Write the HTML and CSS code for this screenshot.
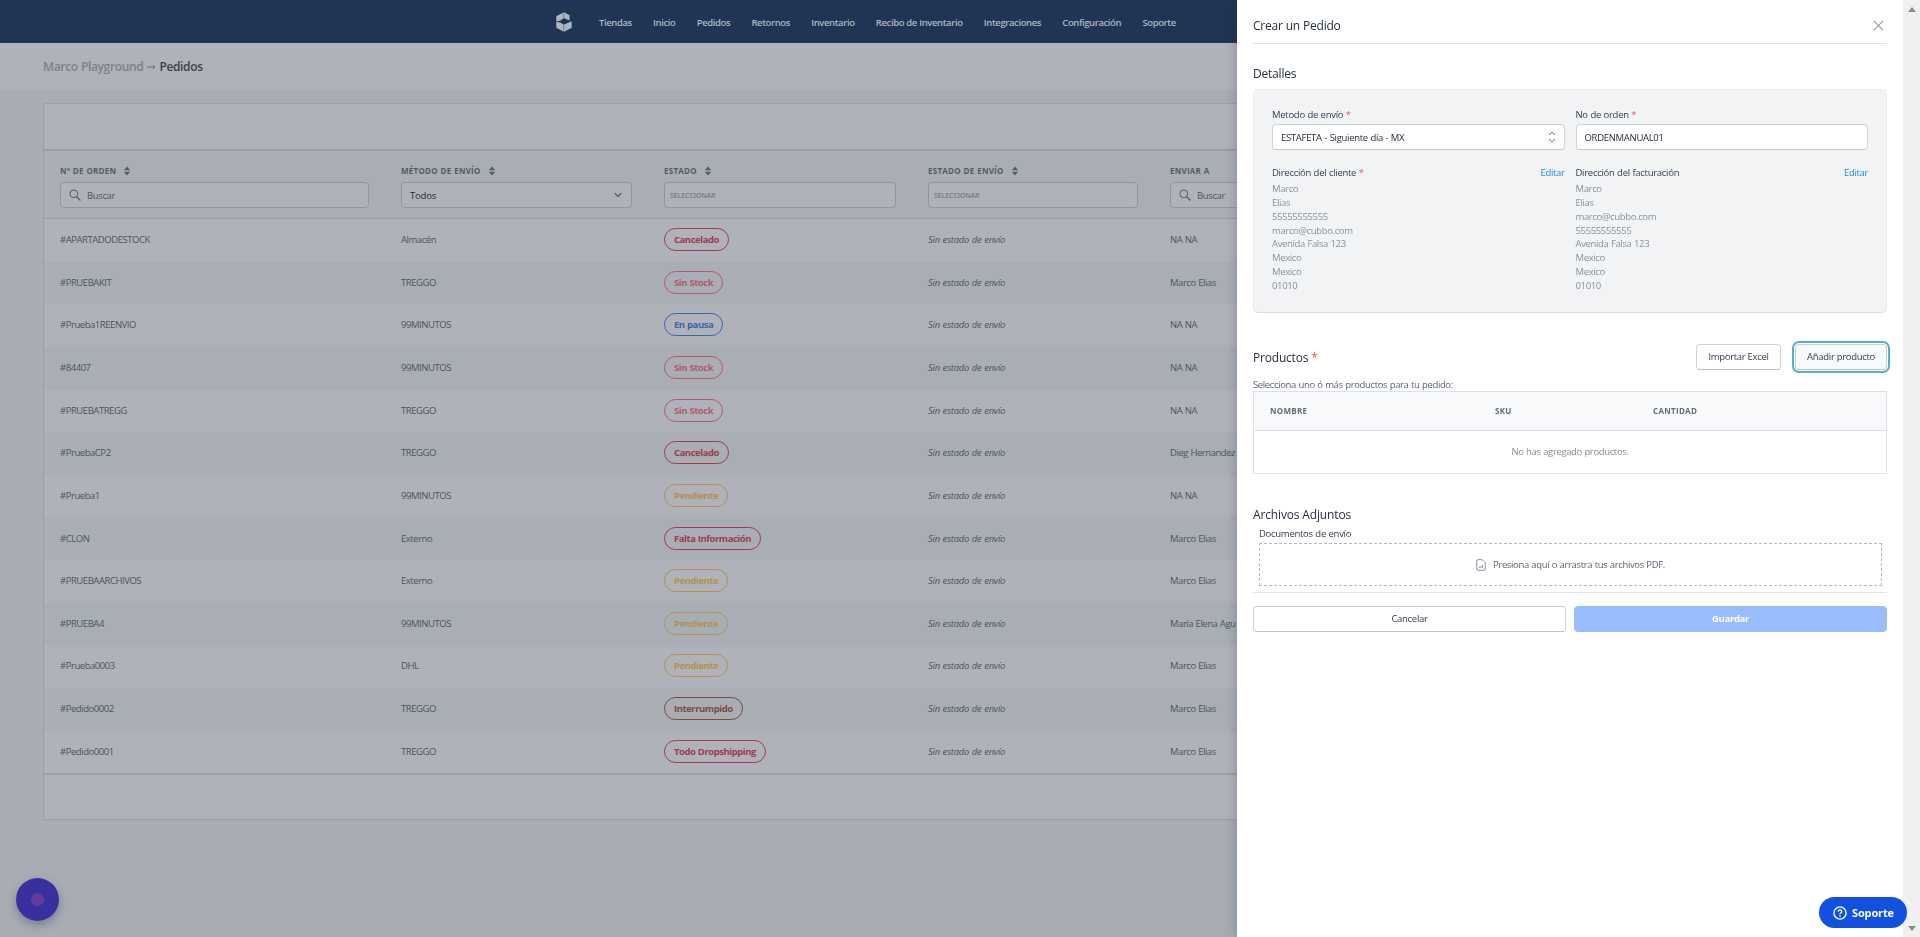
FILE: index.html
```html
<!DOCTYPE html>
<html lang="es">
<head>
<meta charset="utf-8">
<title>Pedidos</title>
<link rel="stylesheet" href="styles.css">
</head>
<body>
<svg class="defs" width="0" height="0">
  <symbol id="sort" viewBox="0 0 8 12"><path d="M4 .6 7.8 5.2H.2zM4 11.4.2 6.8h7.6z" fill="currentColor"/></symbol>
  <symbol id="search" viewBox="0 0 12 12"><circle cx="4.8" cy="4.8" r="3.9" fill="none" stroke="currentColor" stroke-width=".9"/><path d="M7.6 7.6 11.4 11.5" stroke="currentColor" stroke-width="1.1"/></symbol>
</svg>
<div class="page">
  <nav class="nav">
    <svg class="logo" viewBox="0 0 16 20"><path d="M7.7.2V6.2L4.2 8.8.3 9.4V4.2zM8.1.2 13.6 3.2V8.6L8.1 6.2zM.3 9.8 4.2 10.4 7.7 12.6V19.8L.3 15.8zM8.1 12.6 15.7 9.2V15.8L8.1 19.8z" fill="#adb5c1"/></svg>
    <a>Tiendas</a><a>Inicio</a><a>Pedidos</a><a>Retornos</a><a>Inventario</a><a>Recibo de Inventario</a><a>Integraciones</a><a>Configuración</a><a>Soporte</a>
  </nav>
  <header class="crumb"><span class="store">Marco Playground</span><svg class="arrow" viewBox="0 0 9 6"><path d="M0 3H8M6 1.2 8 3 6 4.8" fill="none" stroke="currentColor"/></svg><span>Pedidos</span></header>
  <section class="card">
    <div class="toolbar"></div>
    <div class="row head">
      <div><h6>Nº DE ORDEN <svg><use href="#sort"/></svg></h6><div class="input"><svg class="mag"><use href="#search"/></svg>Buscar</div></div>
      <div><h6>MÉTODO DE ENVÍO <svg><use href="#sort"/></svg></h6><div class="input todos">Todos<svg class="chev" viewBox="0 0 10 8"><path d="M1.8 2.2 5 5.5 8.2 2.2" fill="none" stroke="#454e5b" stroke-width="1.1"/></svg></div></div>
      <div><h6>ESTADO <svg><use href="#sort"/></svg></h6><div class="input sel">SELECCIONAR</div></div>
      <div><h6>ESTADO DE ENVÍO <svg><use href="#sort"/></svg></h6><div class="input sel">SELECCIONAR</div></div>
      <div><h6>ENVIAR A</h6><div class="input"><svg class="mag"><use href="#search"/></svg>Buscar</div></div>
    </div>
    <div class="rows">
      <div class="row"><div>#APARTADODESTOCK</div><div>Almacén</div><div><b class="tag red">Cancelado</b></div><div><i>Sin estado de envío</i></div><div>NA NA</div></div>
      <div class="row"><div>#PRUEBAKIT</div><div>TREGGO</div><div><b class="tag rose">Sin Stock</b></div><div><i>Sin estado de envío</i></div><div>Marco Elias</div></div>
      <div class="row"><div>#Prueba1REENVIO</div><div>99MINUTOS</div><div><b class="tag blue">En pausa</b></div><div><i>Sin estado de envío</i></div><div>NA NA</div></div>
      <div class="row"><div>#84407</div><div>99MINUTOS</div><div><b class="tag rose">Sin Stock</b></div><div><i>Sin estado de envío</i></div><div>NA NA</div></div>
      <div class="row"><div>#PRUEBATREGG</div><div>TREGGO</div><div><b class="tag rose">Sin Stock</b></div><div><i>Sin estado de envío</i></div><div>NA NA</div></div>
      <div class="row"><div>#PruebaCP2</div><div>TREGGO</div><div><b class="tag red">Cancelado</b></div><div><i>Sin estado de envío</i></div><div>Dieg Hernandez</div></div>
      <div class="row"><div>#Prueba1</div><div>99MINUTOS</div><div><b class="tag gold">Pendiente</b></div><div><i>Sin estado de envío</i></div><div>NA NA</div></div>
      <div class="row"><div>#CLON</div><div>Externo</div><div><b class="tag red">Falta Información</b></div><div><i>Sin estado de envío</i></div><div>Marco Elias</div></div>
      <div class="row"><div>#PRUEBAARCHIVOS</div><div>Externo</div><div><b class="tag gold">Pendiente</b></div><div><i>Sin estado de envío</i></div><div>Marco Elias</div></div>
      <div class="row"><div>#PRUEBA4</div><div>99MINUTOS</div><div><b class="tag gold">Pendiente</b></div><div><i>Sin estado de envío</i></div><div>María Elena Agu</div></div>
      <div class="row"><div>#Prueba0003</div><div>DHL</div><div><b class="tag gold">Pendiente</b></div><div><i>Sin estado de envío</i></div><div>Marco Elias</div></div>
      <div class="row"><div>#Pedido0002</div><div>TREGGO</div><div><b class="tag brown">Interrumpido</b></div><div><i>Sin estado de envío</i></div><div>Marco Elias</div></div>
      <div class="row"><div>#Pedido0001</div><div>TREGGO</div><div><b class="tag red">Todo Dropshipping</b></div><div><i>Sin estado de envío</i></div><div>Marco Elias</div></div>
    </div>
    <div class="foot"></div>
  </section>
</div>
<div class="fab"></div>

<aside class="drawer">
  <div class="dhead"><h2>Crear un Pedido</h2><svg viewBox="0 0 12 12"><path d="M1 1 11 11M11 1 1 11" stroke="#8f959d" stroke-width="1.1"/></svg></div>
  <h2 class="t1">Detalles</h2>
  <div class="panel">
    <div>
      <label>Metodo de envío <em>*</em></label>
      <div class="field">ESTAFETA - Siguiente día - MX<svg viewBox="0 0 8 12"><path d="M1.2 4 4 1.2 6.8 4M1.2 8 4 10.8 6.8 8" fill="none" stroke="#8b919b" stroke-width="1.1"/></svg></div>
      <div class="ahead"><label>Dirección del cliente <em>*</em></label><a>Editar</a></div>
      <div class="addr"><p>Marco</p><p>Elias</p><p>55555555555</p><p>marco@cubbo.com</p><p>Avenida Falsa 123</p><p>Mexico</p><p>Mexico</p><p>01010</p></div>
    </div>
    <div>
      <label>No de orden <em>*</em></label>
      <div class="field">ORDENMANUAL01</div>
      <div class="ahead"><label>Dirección del facturación</label><a>Editar</a></div>
      <div class="addr"><p>Marco</p><p>Elias</p><p>marco@cubbo.com</p><p>55555555555</p><p>Avenida Falsa 123</p><p>Mexico</p><p>Mexico</p><p>01010</p></div>
    </div>
  </div>
  <div class="phead"><h2>Productos <em>*</em></h2><button>Importar Excel</button><button class="focus">Añadir producto</button></div>
  <p class="hint">Selecciona uno ó más productos para tu pedido:</p>
  <div class="ptable">
    <div class="phd"><span>NOMBRE</span><span>SKU</span><span>CANTIDAD</span></div>
    <div class="empty">No has agregado productos.</div>
  </div>
  <h2 class="t2">Archivos Adjuntos</h2>
  <label class="docs">Documentos de envío</label>
  <div class="drop"><svg viewBox="0 0 10 12"><path d="M.7 2Q.7.7 2 .7H6.2L9.3 3.8V10Q9.3 11.3 8 11.3H2Q.7 11.3.7 10zM3.4 9.2V7.6M5 9.2V6.8M6.6 9.2V5.8" fill="none" stroke="#7d8694" stroke-width=".9"/></svg>Presiona aquí o arrastra tus archivos PDF.</div>
  <div class="actions"><button>Cancelar</button><button class="save">Guardar</button></div>
</aside>
<div class="scroll"><svg viewBox="0 0 8 5"><path d="M4 0 8 5H0z" fill="#8b8b8d"/></svg><svg viewBox="0 0 8 5"><path d="M0 0H8L4 5z" fill="#8b8b8d"/></svg></div>
<div class="help"><svg viewBox="0 0 14 14"><circle cx="7" cy="7" r="6.1" fill="none" stroke="#fff" stroke-width="1.4"/><path d="M5.2 5.6Q5.3 3.9 7 3.9T8.8 5.5Q8.8 6.4 7.8 6.9T7 8.3" fill="none" stroke="#fff" stroke-width="1.3"/><circle cx="7" cy="10" r=".85" fill="#fff"/></svg>Soporte</div>
</body>
</html>
```
FILE: styles.css
```css
* { box-sizing: border-box; }
body { margin: 0; width: 1920px; height: 937px; overflow: hidden; background: #a7acb5; font-family: "Open Sans", "Noto Sans", sans-serif; font-size: 9.5px; letter-spacing: -.36px; word-spacing: .4px; color: #4b5563; }
h2, h6, p { margin: 0; }
em { font-style: normal; color: #f05252; }
.defs { position: absolute; }
.page { width: 1903px; }
.nav { height: 43px; background: #1f3553; display: flex; align-items: center; padding-left: 556px; }
.logo { width: 16px; height: 20px; margin-right: 27px; }
.nav a { font-size: 9.5px; font-weight: 600; color: #adb6c3; margin-right: 21.3px; padding-top: 1px; white-space: nowrap; letter-spacing: -.4px; word-spacing: .2px; }
.crumb { height: 47px; background: #afb2b9; display: flex; align-items: center; padding-left: 43px; font-size: 12px; font-weight: 600; color: #394250; letter-spacing: -.35px; }
.crumb .store { color: #7b818c; }
.crumb .arrow { color: #6b717c; width: 9px; height: 6px; margin: 1px 3px 0 4px; }
.card { margin: 13px 0 0 43px; border: 1px solid #9ba1a9; background: #afb2b9; }
.toolbar { height: 45px; }
.row { display: grid; grid-template-columns: 341px 263px 264px 242px 1fr; height: 42.65px; align-items: center; }
.row > div { padding: 0 16px; white-space: nowrap; }
.row:nth-child(even) { background: #a9aeb5; }
.rows .row { color: #4a5464; padding-bottom: 1.5px; letter-spacing: -.45px; }
.rows i { letter-spacing: -.25px; }
.head { height: 70px; border-top: 2px solid #9a9fa8; border-bottom: 1px solid #9a9fa8; background: #a9aeb5; align-items: start; padding-top: 13px; }
h6 { font-size: 8px; line-height: 14px; font-weight: 700; letter-spacing: .25px; color: #515b69; display: flex; align-items: center; height: 14px; }
h6 svg { width: 8px; height: 10px; margin-left: 7px; }
.input { margin-top: 4px; height: 26px; border: 1px solid #9096a2; border-radius: 4px; display: flex; align-items: center; padding: 0 8px; color: #4b5563; background: #afb2b9; }
.mag { width: 12px; height: 12px; margin-right: 6px; }
.todos { color: #222a36; letter-spacing: -.2px; }
.chev { width: 10px; height: 8px; margin-left: auto; }
.sel { font-size: 7px; font-weight: 600; letter-spacing: -.1px; color: #727985; padding-left: 5px; }
.tag { display: inline-flex; align-items: center; height: 23px; border: 1px solid; border-radius: 12px; padding: 0 9px; font-size: 9.5px; letter-spacing: -.46px; font-weight: 700; vertical-align: middle; }
.red { color: #a03a4c; }
.rose { color: #b15b69; }
.blue { color: #3c63ad; }
.gold { color: #b1934c; }
.brown { color: #80483f; }
.foot { height: 46px; border-top: 2px solid #9a9fa8; }
.fab { position: fixed; left: 16px; top: 878px; width: 43px; height: 43px; border-radius: 50%; background: radial-gradient(circle, #643a9c 0 6px, #3930a0 6.6px); box-shadow: 0 4px 8px rgba(40, 45, 60, .35); }

.drawer { position: fixed; left: 1237px; top: 0; width: 666px; height: 937px; background: #fff; padding: 0 16px; box-shadow: -2px 0 10px rgba(50, 55, 70, .25); color: #4b5563; }
h2 { font-size: 12px; font-weight: 500; color: #252f3f; line-height: 18px; letter-spacing: -.2px; word-spacing: 0; }
.dhead { height: 44px; border-bottom: 1px solid #dfe2e6; display: flex; justify-content: space-between; padding: 17px 3px 0 0; }
.dhead svg { width: 11px; height: 11px; margin-top: 3px; }
.t1 { margin-top: 21px; }
.panel { margin-top: 6px; height: 224px; background: #f2f3f5; border: 1px solid #e9ebee; border-bottom-color: #dcdee2; border-radius: 5px; padding: 18px 18px 0; display: grid; grid-template-columns: 1fr 1fr; column-gap: 11px; }
label { display: block; font-weight: 500; line-height: 14px; color: #374151; white-space: nowrap; letter-spacing: -.28px; }
.field { margin-top: 2px; height: 26px; border: 1px solid #cfd3d9; border-bottom-color: #c0c4ca; border-radius: 4px; background: #fff; display: flex; align-items: center; justify-content: space-between; padding: 0 8px; color: #252f3f; letter-spacing: -.3px; }
.field svg { width: 8px; height: 12px; }
.ahead { margin-top: 16px; display: flex; justify-content: space-between; }
.ahead a { color: #1c8de0; font-weight: 500; line-height: 14px; }
.addr { margin-top: 2px; }
.addr p { line-height: 13.85px; color: #8b919d; }
.phead { margin-top: 31px; height: 26px; display: flex; align-items: center; }
.phead h2 { margin-right: auto; padding-top: 2px; }
button { font: 500 9.5px "Open Sans", sans-serif; letter-spacing: -.3px; height: 26px; border: 1px solid #ced2d8; border-bottom-color: #bcc0c7; border-radius: 4px; background: #fff; color: #374151; padding: 0 0 2px; }
.phead button { width: 85px; }
.phead .focus { width: 92px; margin-left: 14px; background: #f7f9fb; box-shadow: 0 0 0 1px #fff, 0 0 0 3px #55aecb; }
.hint { margin-top: 8px; line-height: 13px; color: #5c6573; }
.ptable { border: 1px solid #dde0e5; height: 83px; }
.phd { height: 39px; border-bottom: 1px solid #dde0e5; background: #f8f9fb; display: grid; grid-template-columns: 225px 158px 1fr; align-items: center; padding: 0 0 1px 16px; font-size: 8px; font-weight: 700; letter-spacing: .3px; color: #626b79; }
.empty { height: 41px; display: flex; align-items: center; justify-content: center; color: #868d98; }
.t2 { margin-top: 32px; letter-spacing: -.15px; }
.docs { margin: 3px 0 0 6px; }
.drop { margin: 2px 5px 6px 6px; height: 43px; border: 1px dashed #b5bac1; display: flex; align-items: center; justify-content: center; color: #5c6573; }
.drop svg { width: 10px; height: 12px; margin-right: 7px; }
.actions { border-top: 1px solid #dfe2e6; padding-top: 13px; display: grid; grid-template-columns: 1fr 1fr; column-gap: 8px; }
.save { background: #99bdfc; border-color: #99bdfc; color: #fff; font-weight: 700; }
.scroll { position: fixed; left: 1903px; top: 0; width: 17px; height: 937px; background: #f0f0f0; display: flex; flex-direction: column; justify-content: space-between; align-items: center; padding: 7px 0 6px; }
.scroll svg { width: 8px; height: 5px; }
.help { position: fixed; left: 1819px; top: 897px; width: 88px; height: 31px; border-radius: 16px; background: #1250df; color: #fff; font-size: 11px; letter-spacing: -.15px; font-weight: 700; display: flex; align-items: center; padding-left: 14px; }
.help svg { width: 14px; height: 14px; margin-right: 5px; }
```
